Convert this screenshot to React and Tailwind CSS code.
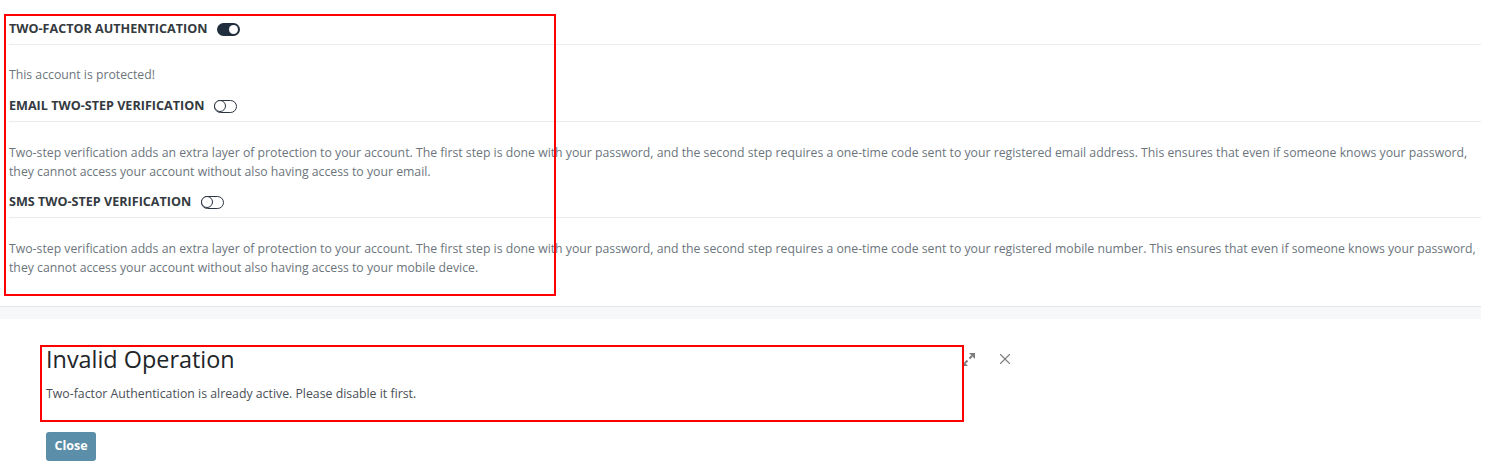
import React from 'react';
import { X } from 'lucide-react';

const Toggle = ({ on }) => (
    <span
        className={
            on
                ? 'inline-flex items-center justify-end w-[23px] h-[13px] rounded-full bg-[#1f2d3d] px-[2px]'
                : 'inline-flex items-center justify-start w-[23px] h-[13px] rounded-full border-[1.5px] border-[#2b3440] bg-white'
        }
    >
        <span
            className={
                on
                    ? 'w-[9px] h-[9px] rounded-full bg-white'
                    : 'w-[12px] h-[12px] rounded-full border-[1.5px] border-[#2b3440] bg-white -ml-[1.5px]'
            }
        />
    </span>
);

const Heading = ({ children, on, className }) => (
    <div className={'flex items-center gap-[10px] pb-[6px] border-b border-[#e9ecef] ' + className}>
        <span className="text-[12.6px] leading-[18px] font-bold text-[#343a40]">{children}</span>
        <Toggle on={on} />
    </div>
);

const ExpandIcon = () => (
    <svg width="15" height="15" viewBox="0 0 15 15" fill="#7d7d7d" stroke="#7d7d7d" strokeWidth="2">
        <path d="M8.5 6.5 L11 4" />
        <path d="M8 1 H14 V7 Z" stroke="none" />
        <path d="M6.5 8.5 L4 11" />
        <path d="M1 8 V14 H7 Z" stroke="none" />
    </svg>
);

export default function App() {
    return (
        <div className="relative w-[1487px] h-[470px] bg-white font-['Open_Sans',sans-serif] overflow-hidden">
            {/* settings panel */}
            <div className="w-[1481px] border-b border-[#e3e6ea]">
                <div className="pl-[9px] pt-[20px] pb-[29px]">
                    <Heading on>TWO-FACTOR AUTHENTICATION</Heading>
                    <p className="mt-[21px] text-[12.25px] leading-[18px] text-[#6c757d]">This account is protected!</p>

                    <Heading className="mt-[13px]">EMAIL TWO-STEP VERIFICATION</Heading>
                    <p className="mt-[21px] text-[12.25px] leading-[19px] text-[#6c757d]">
                        Two-step verification adds an extra layer of protection to your account. The first step is done with your password, and the second step requires a one-time code sent to your registered email address. This ensures that even if someone knows your password, they cannot access your account without also having access to your email.
                    </p>

                    <Heading className="mt-[12px]">SMS TWO-STEP VERIFICATION</Heading>
                    <p className="mt-[21px] text-[12.25px] leading-[19px] text-[#6c757d]">
                        Two-step verification adds an extra layer of protection to your account. The first step is done with your password, and the second step requires a one-time code sent to your registered mobile number. This ensures that even if someone knows your password, they cannot access your account without also having access to your mobile device.
                    </p>
                </div>
            </div>
            <div className="w-[1481px] h-[12px] bg-[#f7f8fa]" />

            {/* dialog */}
            <div className="pl-[46px] pt-[26px]">
                <div className="flex items-start w-[968px]">
                    <h2 className="flex-1 text-[23.4px] leading-[28px] font-medium text-[#212529]">Invalid Operation</h2>
                    <div className="flex items-center gap-[20px] pt-[5px]">
                        <ExpandIcon />
                        <X className="w-[18px] h-[18px] text-[#7d7d7d]" strokeWidth={1.5} />
                    </div>
                </div>
                <p className="mt-[12px] text-[12.3px] leading-[18px] text-[#495057]">
                    Two-factor Authentication is already active. Please disable it first.
                </p>
                <button className="mt-[29px] w-[50px] h-[29px] rounded-[3px] bg-[#5b8ea8] text-white text-[12.5px] font-bold">
                    Close
                </button>
            </div>

            {/* annotation boxes */}
            <div className="absolute left-[4px] top-[14px] w-[552px] h-[282px] border-2 border-[#ff0000] pointer-events-none" />
            <div className="absolute left-[40px] top-[345px] w-[924px] h-[77px] border-2 border-[#ff0000] pointer-events-none" />
        </div>
    );
}
